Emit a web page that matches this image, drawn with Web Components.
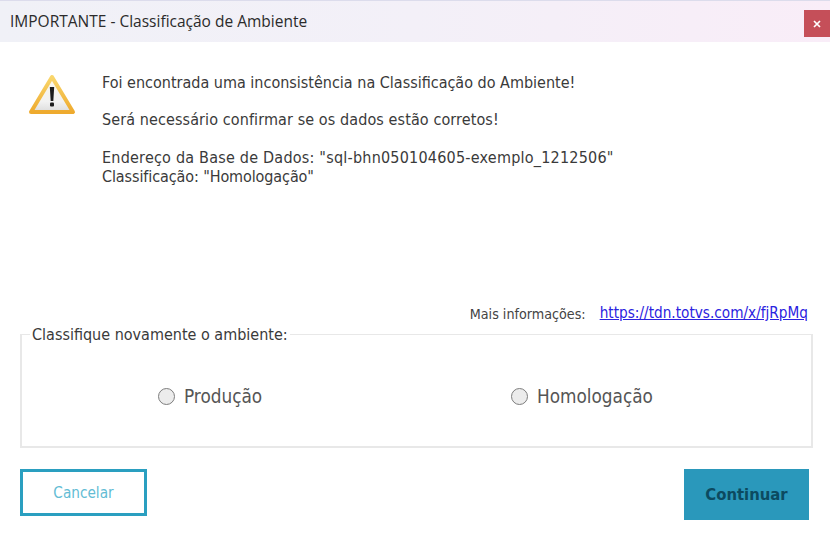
<!DOCTYPE html>
<html lang="pt-BR">
<head>
<meta charset="utf-8">
<title>IMPORTANTE - Classificação de Ambiente</title>
<style>
  html, body { margin: 0; padding: 0; background: #fff; }
</style>
</head>
<body>
<template id="tpl-title-bar">
  <style>
    :host { display: flex; height: 42px; box-sizing: border-box; border-top: 1px solid #dcdcec; background: linear-gradient(90deg, #f0f1f7 0%, #f3f0f8 50%, #f9edf8 100%); font: 15.5px "Open Sans", "Noto Sans", sans-serif; color: #2b2b2b; }
    .label { flex: 1; padding: 10px 0 0 10px; line-height: 20px; }
    .close { width: 26px; height: 27px; margin-top: 9px; background: #c54f59; display: flex; align-items: center; justify-content: center; }
  </style>
  <div class="label"><slot></slot></div>
  <div class="close">
    <svg width="8" height="8" viewBox="0 0 8 8"><path d="M1 1l6 6M7 1l-6 6" stroke="#fff" stroke-width="1.7" fill="none"/></svg>
  </div>
</template>

<template id="tpl-message-area">
  <style>
    :host { display: flex; height: 261px; box-sizing: border-box; padding: 31px 0 0 28px; gap: 26px; }
    .msg { font: 16px/19px "DejaVu Sans Condensed", "DejaVu Sans", sans-serif; color: #3a3a3a; }
    svg { flex: none; }
  </style>
  <svg width="48" height="44" viewBox="0 0 48 44">
    <defs>
      <linearGradient id="fill" x1="0" y1="0" x2="0" y2="1">
        <stop offset="0" stop-color="#fbf8ec"/><stop offset="0.7" stop-color="#f2f2f2"/><stop offset="1" stop-color="#dcdcdc"/>
      </linearGradient>
      <linearGradient id="edge" x1="0" y1="0" x2="0" y2="1">
        <stop offset="0" stop-color="#f9d66c"/><stop offset="1" stop-color="#eeaa2e"/>
      </linearGradient>
    </defs>
    <path d="M24 4 L45 39 H3 Z" fill="url(#fill)" stroke="url(#edge)" stroke-width="4" stroke-linejoin="round"/>
    <path d="M21.8 14h4.4l-.9 14h-2.6z" fill="#1c1c1c"/>
    <rect x="22" y="29.5" width="4" height="4" rx="1" fill="#1c1c1c"/>
  </svg>
  <div class="msg"><slot></slot></div>
</template>

<template id="tpl-info-link">
  <style>
    :host { display: flex; justify-content: flex-end; gap: 14px; align-items: center; height: 22px; padding-right: 22px; font: 14.2px "DejaVu Sans Condensed", "DejaVu Sans", sans-serif; color: #444; }
    a { color: #2a22e0; text-decoration: underline; font-size: 15.2px; position: relative; top: -1px; }
  </style>
  <span><slot name="label"></slot></span>
  <a href="#"><slot name="link"></slot></a>
</template>

<template id="tpl-group-box">
  <style>
    :host { display: block; margin: 1px 19px 0 20px; }
    fieldset { margin: 0; padding: 0; height: 122px; box-sizing: border-box; border: 2px solid #e8e8e8; border-width: 1px 2px 2px 2px; display: flex; justify-content: flex-start; }
    legend { margin-left: 8px; padding: 0 2px; font: 16px/16px "DejaVu Sans Condensed", "DejaVu Sans", sans-serif; color: #3a3a3a; }
    legend span { position: relative; top: 1px; }
    .options { display: grid; grid-template-columns: 353px 300px; padding: 42px 0 0 136px; }
  </style>
  <fieldset>
    <legend><span><slot name="legend"></slot></span></legend>
    <div class="options"><slot></slot></div>
  </fieldset>
</template>

<template id="tpl-radio-option">
  <style>
    :host { display: flex; align-items: center; gap: 9px; height: 24px; font: 18.8px "DejaVu Sans Condensed", "DejaVu Sans", sans-serif; color: #555; }
    i { width: 17px; height: 17px; box-sizing: border-box; border-radius: 50%; border: 1.5px solid #7d7d7d; background: #ececec; }
  </style>
  <i></i><span><slot></slot></span>
</template>

<template id="tpl-action-button">
  <style>
    :host { display: flex; align-items: center; justify-content: center; box-sizing: border-box; font: 15.2px "DejaVu Sans Condensed", "DejaVu Sans", sans-serif; }
    :host([kind="outline"]) { width: 127px; height: 47px; border: 3px solid #2a9fc0; color: #62bcd4; background: #fff; }
    :host([kind="solid"]) { width: 125px; height: 51px; background: #2a98bb; color: #0c4a60; font-size: 16.5px; font-weight: bold; }
  </style>
  <slot></slot>
</template>

<template id="tpl-button-row">
  <style>
    :host { display: flex; justify-content: space-between; align-items: flex-start; padding: 21px 21px 0 20px; }
  </style>
  <slot></slot>
</template>

<classify-dialog-title>IMPORTANTE - Classificação de Ambiente</classify-dialog-title>
<classify-message>
  <div>Foi encontrada uma inconsistência na Classificação do Ambiente!</div>
  <div style="margin-top:18px;letter-spacing:.1px">Será necessário confirmar se os dados estão corretos!</div>
  <div style="margin-top:19px;letter-spacing:.22px">Endereço da Base de Dados: "sql-bhn050104605-exemplo_1212506"</div>
  <div style="letter-spacing:-.1px">Classificação: "Homologação"</div>
</classify-message>
<classify-info>
  <span slot="label">Mais informações:</span>
  <span slot="link">https://tdn.totvs.com/x/fjRpMq</span>
</classify-info>
<classify-group>
  <span slot="legend">Classifique novamente o ambiente:</span>
  <classify-radio>Produção</classify-radio>
  <classify-radio>Homologação</classify-radio>
</classify-group>
<classify-buttons>
  <classify-button kind="outline">Cancelar</classify-button>
  <classify-button kind="solid">Continuar</classify-button>
</classify-buttons>

<script>
  // every element just clones its own template into an open shadow root
  const elementos = {
    "classify-dialog-title": "tpl-title-bar",
    "classify-message": "tpl-message-area",
    "classify-info": "tpl-info-link",
    "classify-group": "tpl-group-box",
    "classify-radio": "tpl-radio-option",
    "classify-button": "tpl-action-button",
    "classify-buttons": "tpl-button-row"
  };

  for (const [nome, tpl] of Object.entries(elementos)) {
    customElements.define(nome, class extends HTMLElement {
      constructor() {
        super();
        this.attachShadow({ mode: "open" });
        this.shadowRoot.appendChild(document.getElementById(tpl).content.cloneNode(true));
      }
    });
  }
</script>
</body>
</html>
